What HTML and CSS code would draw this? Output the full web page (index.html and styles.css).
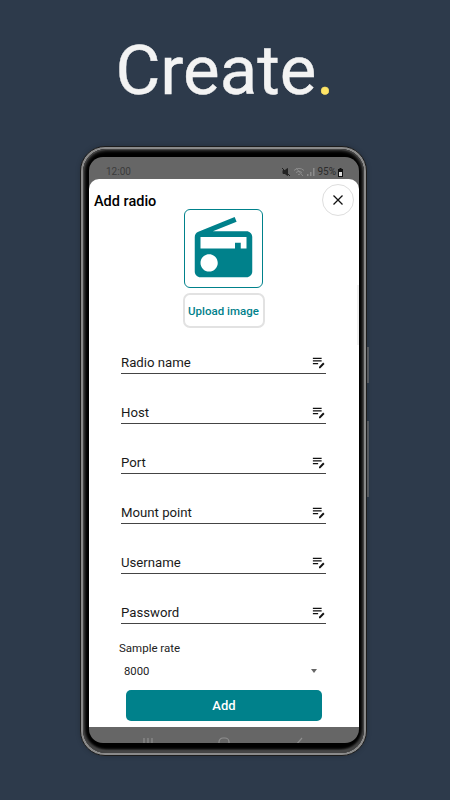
FILE: index.html
```html
<!DOCTYPE html>
<html lang="en">
<head>
    <meta charset="UTF-8">
    <meta name="viewport" content="width=device-width, initial-scale=1.0">
    <title>Create</title>
    <link rel="stylesheet" href="styles.css">
</head>
<body>
    <h1 class="headline">Create<span class="headline-dot">.</span></h1>

    <div class="phone">
        <span class="side-key side-key-top"></span>
        <span class="side-key side-key-bottom"></span>
        <div class="bezel">
            <div class="screen">
                <div class="status-bar">
                    <span class="status-time">12:00</span>
                    <div class="status-icons">
                        <svg width="10" height="10" viewBox="0 0 10 10"><path d="M1 1l8 8M2 3.500h2L6.500 1.500v7L4 6.500H2z" fill="#222" stroke="#222" stroke-width="1"/></svg>
                        <svg width="12" height="10" viewBox="0 0 12 10"><path d="M1 3.500a7 7 0 0 1 10 0M3 5.500a4.500 4.500 0 0 1 6 0M5 7.500a2 2 0 0 1 2 0M3 1l7 8" fill="none" stroke="#8c8c8c" stroke-width="1"/></svg>
                        <svg width="8" height="10" viewBox="0 0 8 10"><path d="M0 9h1.500V7H0zM3 9h1.500V5H3zM6 9h1.500V1H6z" fill="#8c8c8c"/></svg>
                        <span class="status-battery-text">95%</span>
                        <svg width="5" height="9" viewBox="0 0 5 9"><path d="M1.500 0h2v1H5v8H0V1h1.500z" fill="#111"/><path d="M1 4h3v4H1z" fill="#ddd"/></svg>
                    </div>
                </div>

                <div class="sheet">
                    <h2 class="sheet-title">Add radio</h2>
                    <button class="close-button">
                        <svg width="12" height="12" viewBox="0 0 12 12"><path d="M1.500 1.500l9 9M10.500 1.500l-9 9" stroke="#111" stroke-width="1.300"/></svg>
                    </button>
                    <span class="scroll-hint"></span>

                    <div class="image-box">
                        <svg width="69" height="69" viewBox="0 0 24 24"><path fill="#00818b" d="M3.240 6.150C2.510 6.430 2 7.170 2 8v12c0 1.100.890 2 2 2h16c1.110 0 2-.900 2-2V8c0-1.110-.890-2-2-2H8.300l8.260-3.340L15.880 1 3.240 6.150zM7 20c-1.660 0-3-1.340-3-3s1.340-3 3-3 3 1.340 3 3-1.340 3-3 3zm13-8h-2v-2h-2v2H4V8h16v4z"/></svg>
                    </div>
                    <button class="upload-button">Upload image</button>

                    <div class="fields">
                        <div class="field"><span>Radio name</span><svg class="field-icon" viewBox="0 0 16 16"><path d="M1 3h10v1.500H1zM1 6h10v1.500H1zM1 9h6v1.500H1z"/><path d="M8 15v-1.500l4.800-4.800 1.500 1.500L9.500 15z"/></svg></div>
                        <div class="field"><span>Host</span><svg class="field-icon" viewBox="0 0 16 16"><path d="M1 3h10v1.500H1zM1 6h10v1.500H1zM1 9h6v1.500H1z"/><path d="M8 15v-1.500l4.800-4.800 1.500 1.500L9.500 15z"/></svg></div>
                        <div class="field"><span>Port</span><svg class="field-icon" viewBox="0 0 16 16"><path d="M1 3h10v1.500H1zM1 6h10v1.500H1zM1 9h6v1.500H1z"/><path d="M8 15v-1.500l4.800-4.800 1.500 1.500L9.500 15z"/></svg></div>
                        <div class="field"><span>Mount point</span><svg class="field-icon" viewBox="0 0 16 16"><path d="M1 3h10v1.500H1zM1 6h10v1.500H1zM1 9h6v1.500H1z"/><path d="M8 15v-1.500l4.800-4.800 1.500 1.500L9.500 15z"/></svg></div>
                        <div class="field"><span>Username</span><svg class="field-icon" viewBox="0 0 16 16"><path d="M1 3h10v1.500H1zM1 6h10v1.500H1zM1 9h6v1.500H1z"/><path d="M8 15v-1.500l4.800-4.800 1.500 1.500L9.500 15z"/></svg></div>
                        <div class="field"><span>Password</span><svg class="field-icon" viewBox="0 0 16 16"><path d="M1 3h10v1.500H1zM1 6h10v1.500H1zM1 9h6v1.500H1z"/><path d="M8 15v-1.500l4.800-4.800 1.500 1.500L9.500 15z"/></svg></div>
                    </div>

                    <div class="sample-label">Sample rate</div>
                    <div class="sample-select">
                        <span>8000</span>
                        <span class="select-arrow"></span>
                    </div>
                    <button class="add-button">Add</button>
                </div>

                <div class="nav-bar">
                    <svg width="10" height="10" viewBox="0 0 10 10"><path d="M1 1v9M5 1v9M9 1v9" stroke="#8e8e8e" stroke-width="1.200"/></svg>
                    <svg width="12" height="10" viewBox="0 0 12 10"><rect x="1" y="1" width="10" height="12" rx="4" fill="none" stroke="#8e8e8e" stroke-width="1.200"/></svg>
                    <svg width="10" height="10" viewBox="0 0 10 10"><path d="M8 1L2 8" fill="none" stroke="#8e8e8e" stroke-width="1.200"/></svg>
                </div>
            </div>
        </div>
    </div>
</body>
</html>
```

FILE: styles.css
```css
* {
    box-sizing: border-box;
}

body {
    margin: 0;
    height: 800px;
    overflow: hidden;
    background: #2d3a4b;
    font-family: 'Roboto', sans-serif;
    color: #111;
}

.headline {
    margin: 0;
    height: 146px;
    padding-top: 30px;
    text-align: center;
    font-size: 69px;
    line-height: 82px;
    font-weight: 400;
    color: #f3f3f3;
    -webkit-text-stroke: 0.4px #f3f3f3;
}

.headline-dot {
    color: #ffe566;
    -webkit-text-stroke: 0.4px #ffe566;
}

.phone {
    position: relative;
    width: 287px;
    height: 610px;
    margin-left: 80px;
    padding: 2px;
    border-radius: 25px;
    border: 1px solid #1c1c1c;
    background: #8a8a8a;
    box-shadow: 0 0 5px rgba(0, 0, 0, 0.2);
}

.side-key {
    position: absolute;
    right: -3px;
    width: 2px;
    background: #55595f;
}

.side-key-top {
    top: 200px;
    height: 36px;
}

.side-key-bottom {
    top: 274px;
    height: 76px;
}

.bezel {
    height: 100%;
    padding: 8px 5px 10px 6px;
    border-radius: 23px;
    background: #000;
    box-shadow: inset 0 0 0 1px #444, inset 0 0 3px 2px #3a3a3a, inset 0 -3px 3px #6a6a6a;
}

.screen {
    display: flex;
    flex-direction: column;
    height: 100%;
    border-radius: 14px;
    overflow: hidden;
    background: #666;
}

.status-bar {
    display: flex;
    align-items: center;
    justify-content: space-between;
    height: 22px;
    padding: 8px 16px 0 17px;
    flex-shrink: 0;
}

.status-time {
    font-size: 10px;
    line-height: 14px;
    color: #3c3c3c;
}

.status-icons {
    display: flex;
    align-items: center;
    gap: 2px;
}

.status-battery-text {
    font-size: 10px;
    line-height: 14px;
    color: #2c2c2c;
}

.sheet {
    position: relative;
    display: flex;
    flex-direction: column;
    align-items: center;
    height: 548px;
    flex-shrink: 0;
    border-radius: 10px 10px 0 0;
    background: #fff;
}

.sheet-title {
    align-self: flex-start;
    margin: 15px 0 0 5px;
    height: 15px;
    font-size: 14.500px;
    line-height: 16px;
    font-weight: 500;
    color: #000;
    flex-shrink: 0;
}

.close-button {
    position: absolute;
    top: 5px;
    right: 5px;
    display: flex;
    align-items: center;
    justify-content: center;
    width: 32px;
    height: 32px;
    padding: 0;
    border: 1px solid #dedede;
    border-radius: 50%;
    background: #fff;
}

.scroll-hint {
    position: absolute;
    top: 106px;
    right: 0;
    width: 2px;
    height: 60px;
    background: #efefef;
}

.image-box {
    display: flex;
    align-items: center;
    justify-content: center;
    width: 79px;
    height: 79px;
    flex-shrink: 0;
    margin-left: -1px;
    border: 1px solid #00818b;
    border-radius: 6px;
}

.upload-button {
    width: 82px;
    height: 35px;
    flex-shrink: 0;
    margin-top: 5px;
    margin-left: -1px;
    padding: 0;
    border: 2px solid #e2e2e2;
    border-radius: 7px;
    background: #fff;
    font-family: 'Roboto', sans-serif;
    font-size: 11.500px;
    font-weight: 500;
    color: #00818b;
}

.fields {
    display: flex;
    flex-direction: column;
    gap: 18px;
    align-self: flex-start;
    flex-shrink: 0;
    width: 205px;
    margin: 14px 0 0 32px;
}

.field {
    display: flex;
    align-items: flex-end;
    justify-content: space-between;
    height: 32px;
    padding-bottom: 2px;
    border-bottom: 1px solid #444;
    font-size: 13.200px;
    line-height: 16px;
    color: #1a1a1a;
}

.field-icon {
    width: 14px;
    height: 14px;
    margin-bottom: 2px;
    fill: #111;
}

.sample-label {
    align-self: flex-start;
    flex-shrink: 0;
    margin: 17px 0 0 30px;
    font-size: 11.500px;
    line-height: 14px;
    color: #222;
}

.sample-select {
    display: flex;
    align-items: center;
    justify-content: space-between;
    align-self: flex-start;
    flex-shrink: 0;
    width: 193px;
    height: 16px;
    margin: 8px 0 0 35px;
    font-size: 11.300px;
    color: #222;
}

.select-arrow {
    width: 0;
    height: 0;
    border-left: 3.500px solid transparent;
    border-right: 3.500px solid transparent;
    border-top: 4px solid #666;
}

.add-button {
    width: 196px;
    height: 31px;
    flex-shrink: 0;
    margin-top: 11px;
    border: 0;
    border-radius: 5px;
    background: #00818b;
    color: #fff;
    font-family: 'Roboto', sans-serif;
    font-size: 13px;
    font-weight: 500;
}

.nav-bar {
    display: flex;
    justify-content: space-between;
    padding: 10px 55px 0 54px;
    height: 20px;
    flex-shrink: 0;
    overflow: hidden;
}
```
